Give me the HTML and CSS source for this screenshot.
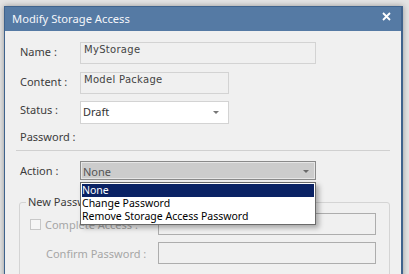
FILE: index.html
```html
<!DOCTYPE html>
<html lang="en">
<head>
	<title>Modify Storage Access</title>
	<meta charset="utf-8" />
	<link rel="stylesheet" href="styles.css">
</head>
<body>
	<div class="dialog">
		<div class="titlebar">
			<span>Modify Storage Access</span>
			<svg class="close" width="9" height="9" viewBox="0 0 9 9"><path d="M1 1L8 8M8 1L1 8" stroke="#fff" stroke-width="1.8"/></svg>
		</div>
		<div class="content">
			<div class="row row-name">
				<label>Name :</label>
				<div class="field wide">MyStorage</div>
			</div>
			<div class="row row-content">
				<label>Content :</label>
				<div class="field">Model Package</div>
			</div>
			<div class="row row-status">
				<label>Status :</label>
				<div class="select">
					<span>Draft</span>
					<i class="arrow"></i>
				</div>
			</div>
			<div class="row row-pass">
				<label>Password :</label>
			</div>
			<hr class="sep">
			<div class="row row-action">
				<label>Action :</label>
				<div class="select action">
					<span>None</span>
					<i class="arrow"></i>
					<ul class="list">
						<li class="selected">None</li>
						<li>Change Password</li>
						<li>Remove Storage Access Password</li>
					</ul>
				</div>
			</div>
			<fieldset class="group">
				<legend>New Password</legend>
				<div class="grow">
					<span class="check"></span>
					<span class="dim lbl-check">Complete Access :</span>
					<div class="input"></div>
				</div>
				<div class="grow">
					<span class="dim lbl-confirm">Confirm Password :</span>
					<div class="input"></div>
				</div>
			</fieldset>
		</div>
	</div>
</body>
</html>
```

FILE: styles.css
```css
html, body {
	margin: 0;
	height: 100%;
	overflow: hidden;
}
body {
	background: #e4e4e4;
	padding: 6px 0 0 4px;
	font-family: "Noto Sans", "Open Sans", sans-serif;
	font-size: 11px;
	color: #3c3c3c;
}
.dialog {
	box-sizing: border-box;
	width: 399px;
	height: 290px;
	background: #f0f0f0;
	border: 1px solid #3f638d;
	border-right-width: 2px;
	box-shadow: 0 0 6px rgba(0,0,0,.35);
}
.titlebar {
	height: 22px;
	background: #557aa4;
	color: #f4f6fa;
	font-size: 11.2px;
	display: flex;
	align-items: center;
	justify-content: space-between;
	padding: 0 10px 2px 7px;
}
.close {
	margin-top: -3px;
}
.content {
	padding: 11px 11px 0 15px;
}
.row {
	display: flex;
	align-items: center;
}
.row label {
	width: 60px;
	flex: none;
}
.row-name label,
.row-content label {
	margin-bottom: 3px;
}
.field {
	box-sizing: border-box;
	height: 22px;
	width: 149px;
	border: 1px solid #d3d3d3;
	padding: 1px 0 0 3px;
	font-family: "DejaVu Sans", sans-serif;
	font-size: 10px;
	letter-spacing: .3px;
	color: #444;
}
.field.wide {
	width: 236px;
}
.row-content {
	margin-top: 8px;
}
.row-status {
	margin-top: 7px;
}
.row-status label {
	margin-top: -6px;
}
.select {
	position: relative;
	box-sizing: border-box;
	width: 149px;
	height: 23px;
	background: #fff;
	border: 1px solid #d3d3d3;
	display: flex;
	align-items: center;
	padding: 0 0 2px 2px;
	color: #333;
	font-size: 11px;
}
.arrow {
	position: absolute;
	right: 9px;
	top: 9px;
	border-left: 3px solid transparent;
	border-right: 3px solid transparent;
	border-top: 3px solid #777;
}
.row-pass {
	height: 15px;
	margin-top: 5px;
}
.sep {
	margin: 6px 0 0 -4px;
	border: none;
	border-top: 1px solid #d0d0d0;
}
.row-action {
	margin-top: 10px;
}
.select.action {
	width: 236px;
	height: 19px;
	padding: 1px 0 0 2px;
	background: #cccccc;
	border-color: #8a8a8a;
	box-shadow: inset 0 0 0 1px #e6e6e6;
	color: #555;
}
.select.action .arrow {
	top: 8px;
	right: 6px;
	border-top-color: #6a6a6a;
}
.list {
	position: absolute;
	top: 20px;
	left: -1px;
	width: 236px;
	box-sizing: border-box;
	margin: 0;
	padding: 1px;
	list-style: none;
	background: #fff;
	border: 1px solid #6a6a6a;
	box-shadow: 3px 3px 5px rgba(0,0,0,.3);
	color: #000;
	font-size: 10.5px;
	line-height: 13px;
	z-index: 2;
}
.list li.selected {
	background: #0a2264;
	color: #fff;
}
.group {
	margin: 15px 0 0 -1px;
	padding: 4px 0 20px 10px;
	border: 1px solid #d4d4d4;
	border-radius: 3px;
}
.group legend {
	margin-left: -4px;
	padding: 0 2px;
	line-height: 14px;
}
.grow {
	display: flex;
	align-items: center;
	height: 22px;
}
.grow + .grow {
	margin-top: 7px;
}
.check {
	box-sizing: border-box;
	width: 11px;
	height: 11px;
	border: 1px solid #c8c8c8;
	background: #f6f6f6;
	margin-right: 4px;
}
.dim {
	color: #a6a6a6;
}
.lbl-check {
	width: 113px;
}
.lbl-confirm {
	width: 112px;
	padding-left: 16px;
}
.input {
	box-sizing: border-box;
	width: 218px;
	height: 22px;
	border: 1px solid #adadad;
}
```
